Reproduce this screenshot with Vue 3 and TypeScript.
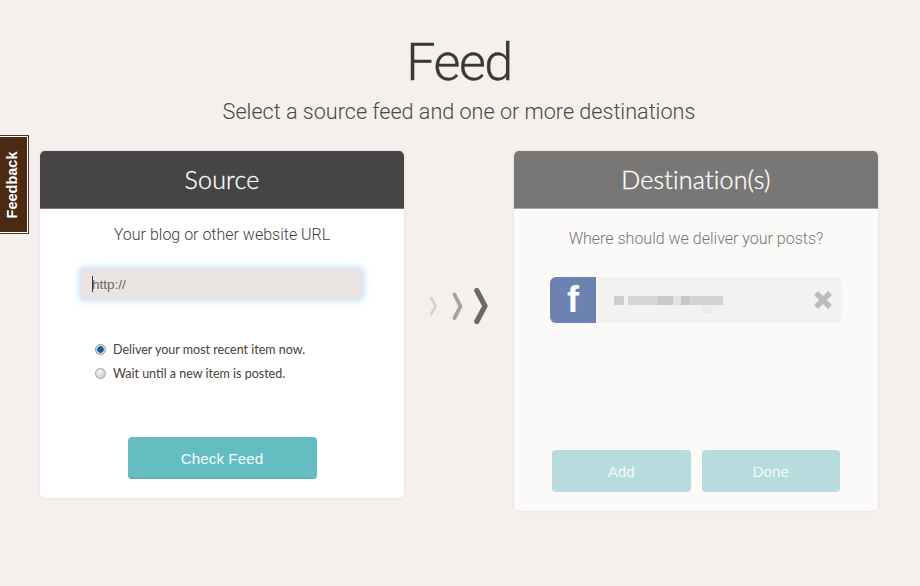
<script setup lang="ts">
const options = [
  { label: 'Deliver your most recent item now.', on: true },
  { label: 'Wait until a new item is posted.', on: false },
]
</script>

<template>
  <div class="page">
    <div class="feedback"><div class="tab"><span>Feedback</span></div></div>
    <header class="head">
      <h1>Feed</h1>
      <p>Select a source feed and one or more destinations</p>
    </header>
    <main class="row">
      <section class="card source">
        <h2 class="bar dark">Source</h2>
        <div class="body src-body">
          <div class="label">Your blog or other website URL</div>
          <div class="input"><i class="caret"></i>http://</div>
          <div class="options">
            <div v-for="o in options" :key="o.label" class="opt">
              <span class="radio" :class="{ on: o.on }"></span>{{ o.label }}
            </div>
          </div>
          <button class="btn check">Check Feed</button>
        </div>
      </section>

      <div class="arrows">
        <svg width="60" height="40" viewBox="0 0 60 40" fill="none" stroke-linejoin="round" stroke-linecap="round">
          <path d="M1.2 11 L5.5 19 L1.2 27" stroke="#d2d0ce" stroke-width="2.6" />
          <path d="M24.5 7.5 L30.5 19.3 L24.5 31.2" stroke="#a5a3a1" stroke-width="3.8" />
          <path d="M46.8 3.5 L55 19 L46.8 34.5" stroke="#6b6a69" stroke-width="5.2" />
        </svg>
      </div>

      <section class="card dest">
        <h2 class="bar grey">Destination(s)</h2>
        <div class="body dest-body">
          <div class="label muted">Where should we deliver your posts?</div>
          <div class="account">
            <div class="fb">f</div>
            <div class="blur">
              <i style="width: 10px; background: #cfcecd"></i>
              <i style="width: 30px; margin-left: 4px; background: #d6d5d4"></i>
              <i style="width: 15px; background: #cbcac9"></i>
              <i style="width: 8px; background: #e4e3e2"></i>
              <i style="width: 9px; background: #c8c7c6"></i>
              <i style="width: 33px; background: #d4d3d2"></i>
              <b></b>
            </div>
            <svg class="x" width="20" height="20" viewBox="0 0 20 20">
              <path d="M3 3 L17 17 M17 3 L3 17" stroke="#bdbcba" stroke-width="5.4" />
            </svg>
          </div>
          <div class="actions">
            <button class="btn soft">Add</button>
            <button class="btn soft">Done</button>
          </div>
        </div>
      </section>
    </main>
  </div>
</template>

<style>
html, body { margin: 0; background: #f5f0ee; }
</style>

<style scoped>
.page {
  position: relative;
  width: 920px;
  height: 586px;
  overflow: hidden;
  background: #f5f0ee;
  font-family: "Liberation Sans", Arial, sans-serif;
}
.feedback {
  position: absolute;
  left: -2px;
  top: 135px;
  width: 31px;
  height: 99px;
  box-sizing: border-box;
  border: 1px solid #4a3626;
  padding: 1px 1px 1px 0;
  background: #fff;
}
.tab {
  width: 100%;
  height: 100%;
  background: #4a2a12;
  display: flex;
  align-items: center;
  justify-content: center;
}
.tab span {
  transform: translateX(-1px) rotate(-90deg);
  color: #fff;
  font-weight: 700;
  font-size: 14.5px;
  white-space: nowrap;
}
.head {
  width: 918px;
  text-align: center;
  padding-top: 29px;
}
.head h1 {
  margin: 0;
  height: 58px;
  font-family: Roboto, sans-serif;
  font-weight: 300;
  font-size: 52px;
  letter-spacing: -1.5px;
  line-height: 68px;
  color: #3a3837;
  -webkit-text-stroke: 0.3px #3a3837;
}
.head p {
  margin: 10px 0 0;
  font-family: Roboto, sans-serif;
  font-weight: 300;
  font-size: 21.6px;
  line-height: 30px;
  color: #4a4847;
}
.row {
  display: flex;
  align-items: flex-start;
  padding-left: 40px;
  margin-top: 24px;
}
.card {
  border-radius: 5px;
  background: #fff;
  box-shadow: 0 0 3px rgba(120, 100, 90, 0.18);
  overflow: hidden;
}
.source { width: 364px; height: 347px; }
.dest { width: 364px; height: 360px; background: #fcfaf9; }
.bar {
  margin: 0;
  height: 58px;
  font-family: Lato, sans-serif;
  font-weight: 300;
  font-size: 25px;
  line-height: 56px;
  text-align: center;
  color: #fff;
  letter-spacing: 0.2px;
  box-sizing: border-box;
  -webkit-text-stroke: 0.3px #fff;
}
.dark { background: #454545; border-bottom: 1px solid #777; }
.grey { background: #797775; border-bottom: 1px solid #aaa; }
.body { display: flex; flex-direction: column; align-items: center; }
.label {
  font-family: Roboto, sans-serif;
  font-weight: 300;
  font-size: 16px;
  line-height: 20px;
  color: #3f3d3c;
}
.src-body .label { margin-top: 16px; }
.muted { margin-top: 20px; color: #777573; }
.input {
  box-sizing: border-box;
  width: 281px;
  height: 30px;
  margin-top: 24px;
  padding-left: 11px;
  border-radius: 4px;
  background: #e9e4e1;
  box-shadow: 0 0 6px 2px rgba(140, 195, 240, 0.55);
  font-size: 13.5px;
  line-height: 31px;
  color: #6a6866;
  position: relative;
  align-self: flex-start;
  margin-left: 41px;
}
.caret {
  position: absolute;
  left: 11px;
  top: 7px;
  width: 1px;
  height: 16px;
  background: #333;
}
.options {
  align-self: flex-start;
  margin: 41px 0 0 55px;
  display: flex;
  flex-direction: column;
  gap: 5px;
}
.opt {
  display: flex;
  align-items: center;
  height: 19px;
  font-family: Lato, sans-serif;
  font-size: 12.5px;
  color: #4a4038;
}
.radio {
  width: 9px;
  height: 9px;
  margin-right: 7px;
  border-radius: 50%;
  border: 1px solid #a0a0a0;
  background: radial-gradient(circle at 40% 35%, #f4f4f4, #c4c4c4);
}
.radio.on {
  background: radial-gradient(circle, #1d5f95 0 3px, #cfd6dc 3.5px);
  border-color: #8c9aa6;
}
.btn {
  border: 0;
  border-radius: 4px;
  color: #fff;
  font-family: "Liberation Sans", Arial, sans-serif;
  font-size: 15.3px;
  padding: 2px 0 0;
}
.check {
  width: 189px;
  height: 42px;
  margin-top: 54px;
  background: #65bdc2;
  border-bottom: 1px solid #5aa8ac;
  color: #f2fbfb;
}
.account {
  display: flex;
  align-items: center;
  width: 292px;
  height: 46px;
  margin-top: 28px;
  align-self: flex-start;
  margin-left: 36px;
  background: #f3f2f1;
  border-radius: 6px;
  overflow: hidden;
}
.fb {
  width: 46px;
  height: 46px;
  flex: none;
  background: #6c83b2;
  color: #fff;
  font-family: "Liberation Sans", Arial, sans-serif;
  font-weight: 700;
  font-size: 36px;
  line-height: 46px;
  text-align: center;
}
.blur {
  position: relative;
  display: flex;
  height: 9px;
  margin-left: 18px;
  flex: 1;
  filter: blur(0.7px);
}
.blur i { display: block; height: 9px; }
.blur b {
  position: absolute;
  left: 89px;
  top: 9px;
  width: 9px;
  height: 8px;
  background: #ebeae9;
}
.x { margin-right: 9px; flex: none; }
.actions {
  display: flex;
  gap: 11px;
  margin-top: 127px;
}
.soft {
  width: 138.5px;
  height: 42px;
  background: #b6dcdd;
  color: #f2fafa;
}
.arrows {
  width: 110px;
  height: 40px;
  margin-top: 136px;
  flex: none;
  display: flex;
}
.arrows svg { margin-left: 26px; flex: none; }
</style>
